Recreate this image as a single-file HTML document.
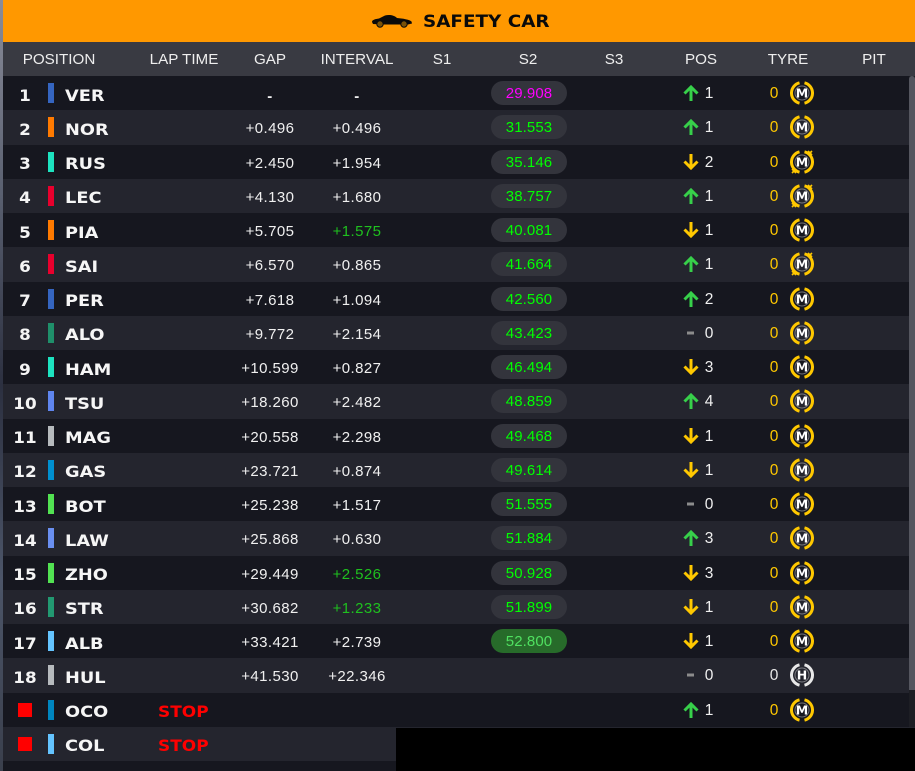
<!DOCTYPE html>
<html><head><meta charset="utf-8">
<style>
html,body{margin:0;padding:0;background:#000;}
#w{position:relative;width:915px;height:771px;overflow:hidden;background:#000;font-family:"Liberation Sans",sans-serif;color:#f0f0f0;}
#sl{position:absolute;left:0;top:0;width:3px;height:771px;background:linear-gradient(#8a8c99,#5a6070 25%,#2c3040 50%,#4c5568 75%,#3a3f4c);}
#top{position:absolute;left:3px;top:0;width:912px;height:42px;background:#ff9800;}
#top b{position:absolute;left:420px;top:12px;font:bold 17px/20px "DejaVu Sans",sans-serif;color:#0a0a0a;white-space:nowrap;transform:scaleX(1.08);transform-origin:left;}
#top svg{position:absolute;left:368px;top:14px;}
#hd{position:absolute;left:3px;top:42px;width:912px;height:34px;background:#393a42;}
#hd span{position:absolute;top:8.500px;font-size:15.200px;line-height:18px;color:#eee;transform:translateX(-50%);white-space:nowrap;}
#rows{position:absolute;left:3px;top:76px;width:912px;}
.r{position:relative;height:34.25px;background:#16171f;}
.r.a{background:#24252e;}
.r>*{position:absolute;}
.n{left:0;width:44px;text-align:center;top:10.500px;font:bold 16px/18px "DejaVu Sans",sans-serif;color:#f4f4f4;transform:scaleX(1.05);}
.q{left:15px;top:10px;width:14px;height:14px;background:#f00;}
.c{left:45px;top:7px;width:5.5px;height:20px;}
.d{left:62px;top:10.500px;font:bold 16px/18px "DejaVu Sans",sans-serif;color:#f6f6f6;transform:scaleX(1.11);transform-origin:left;}
.s{left:155px;top:10.500px;font:bold 16px/18px "DejaVu Sans",sans-serif;color:#f00;transform:scaleX(1.06);transform-origin:left;}
.g,.v{top:11px;width:90px;text-align:center;font-size:15px;line-height:16px;color:#f0f0f0;letter-spacing:.4px;}
.g{left:222px;}.v{left:309px;}
.v.f{color:#1fc01f;}
.h{top:13px;font-weight:bold;}
.p{left:488px;top:5px;width:76px;height:24px;border-radius:12px;background:#33343c;color:#0f0;text-align:center;font-size:15px;line-height:26px;letter-spacing:.1px;}
.p.m{color:#f0f;}
.p.o{background:#276b2a;color:#4fe060;}
.u{left:680px;top:9px;}
.k{left:700px;top:10px;width:12px;text-align:center;font-size:15.500px;line-height:16px;color:#f0f0f0;}
.z{left:765px;top:10px;width:12px;text-align:center;font-size:15.500px;line-height:16px;color:#ffc800;}
.z.w{color:#e8e8e8;}
.t{left:787px;top:5px;}
.t text{font:bold 12.500px "DejaVu Sans",sans-serif;fill:#fff;text-anchor:middle;}
#sb{position:absolute;left:909px;top:76px;width:6px;height:651px;background:#1d1e24;}
#sb i{display:block;width:6px;height:614px;background:#55565f;border-radius:3px 3px 0 0;}
#bl{position:absolute;left:396px;top:728px;width:519px;height:43px;background:#000;}
#bt{position:absolute;left:3px;top:761px;width:393px;height:10px;background:#16171f;}
</style></head><body>
<div id="w">
<div id="sl"></div>
<div id="top">
<svg width="42" height="14" viewBox="0 0 42 14"><path d="M1 8C1 6 4 5 8 4.500L14 1.500C18 0.500 23 1 26 4C32 4.500 38 5.500 40.500 7.500L41 9.500L37 10.500H10L2 10Z" fill="#0a0a0a"/><circle cx="9" cy="10" r="3.200" fill="#7a5208" stroke="#0a0a0a"/><circle cx="33" cy="10" r="3.200" fill="#7a5208" stroke="#0a0a0a"/></svg>
<b>SAFETY CAR</b>
</div>
<div id="hd">
<span style="left:56px">POSITION</span><span style="left:181px">LAP TIME</span><span style="left:267px">GAP</span><span style="left:354px">INTERVAL</span><span style="left:439px">S1</span><span style="left:525px">S2</span><span style="left:611px">S3</span><span style="left:698px">POS</span><span style="left:785px">TYRE</span><span style="left:871px">PIT</span>
</div>
<svg width="0" height="0" style="position:absolute">
<defs>
<symbol id="up" viewBox="0 0 16 16"><path d="M8 16V2M1.500 8.500L8 2L14.500 8.500" fill="none" stroke="#37d04a" stroke-width="3"/></symbol>
<symbol id="dn" viewBox="0 0 16 16"><path d="M8 0V14M1.500 7.500L8 14L14.500 7.500" fill="none" stroke="#ffc800" stroke-width="3"/></symbol>
<symbol id="ds" viewBox="0 0 16 16"><rect x="4" y="6.500" width="7" height="3" fill="#8c8c8c"/></symbol>
<symbol id="rm" viewBox="0 0 24 24"><path d="M9.500 1.800A10.500 10.500 0 0 0 9.500 22.200M14.500 1.800A10.500 10.500 0 0 1 14.500 22.200" fill="none" stroke="#ffc800" stroke-width="3"/><circle cx="12" cy="12" r="7" fill="none" stroke="#fff" stroke-opacity=".4" stroke-width="1"/></symbol>
<symbol id="rh" viewBox="0 0 24 24"><path d="M9.500 1.800A10.500 10.500 0 0 0 9.500 22.200M14.500 1.800A10.500 10.500 0 0 1 14.500 22.200" fill="none" stroke="#e8e8e8" stroke-width="3"/><circle cx="12" cy="12" r="7" fill="none" stroke="#fff" stroke-opacity=".4" stroke-width="1"/></symbol>
<symbol id="x1" viewBox="0 0 24 24"><path d="M18 1L22 5M22 1L18 5" stroke="#ffc800" stroke-width="1.600"/></symbol>
<symbol id="x2" viewBox="0 0 24 24"><path d="M2 19L6 23M6 19L2 23" stroke="#ffc800" stroke-width="1.600"/></symbol>
</defs>
</svg>
<div id="rows">
<div class="r"><b class="n">1</b><i class="c" style="background:#3565c0"></i><b class="d">VER</b><span class="g h">-</span><span class="v h">-</span><span class="p m">29.908</span><svg class="u" width="16" height="16"><use href="#up"/></svg><span class="k">1</span><span class="z">0</span><svg class="t" width="24" height="24"><use href="#rm"/><text x="12" y="16.500">M</text></svg></div>
<div class="r a"><b class="n">2</b><i class="c" style="background:#ff7a00"></i><b class="d">NOR</b><span class="g">+0.496</span><span class="v">+0.496</span><span class="p">31.553</span><svg class="u" width="16" height="16"><use href="#up"/></svg><span class="k">1</span><span class="z">0</span><svg class="t" width="24" height="24"><use href="#rm"/><text x="12" y="16.500">M</text></svg></div>
<div class="r"><b class="n">3</b><i class="c" style="background:#1de3c0"></i><b class="d">RUS</b><span class="g">+2.450</span><span class="v">+1.954</span><span class="p">35.146</span><svg class="u" width="16" height="16"><use href="#dn"/></svg><span class="k">2</span><span class="z">0</span><svg class="t" width="24" height="24"><use href="#rm"/><use href="#x1"/><use href="#x2"/><text x="12" y="16.500">M</text></svg></div>
<div class="r a"><b class="n">4</b><i class="c" style="background:#e8002d"></i><b class="d">LEC</b><span class="g">+4.130</span><span class="v">+1.680</span><span class="p">38.757</span><svg class="u" width="16" height="16"><use href="#up"/></svg><span class="k">1</span><span class="z">0</span><svg class="t" width="24" height="24"><use href="#rm"/><use href="#x1"/><use href="#x2"/><text x="12" y="16.500">M</text></svg></div>
<div class="r"><b class="n">5</b><i class="c" style="background:#ff7a00"></i><b class="d">PIA</b><span class="g">+5.705</span><span class="v f">+1.575</span><span class="p">40.081</span><svg class="u" width="16" height="16"><use href="#dn"/></svg><span class="k">1</span><span class="z">0</span><svg class="t" width="24" height="24"><use href="#rm"/><text x="12" y="16.500">M</text></svg></div>
<div class="r a"><b class="n">6</b><i class="c" style="background:#e8002d"></i><b class="d">SAI</b><span class="g">+6.570</span><span class="v">+0.865</span><span class="p">41.664</span><svg class="u" width="16" height="16"><use href="#up"/></svg><span class="k">1</span><span class="z">0</span><svg class="t" width="24" height="24"><use href="#rm"/><use href="#x1"/><use href="#x2"/><text x="12" y="16.500">M</text></svg></div>
<div class="r"><b class="n">7</b><i class="c" style="background:#3565c0"></i><b class="d">PER</b><span class="g">+7.618</span><span class="v">+1.094</span><span class="p">42.560</span><svg class="u" width="16" height="16"><use href="#up"/></svg><span class="k">2</span><span class="z">0</span><svg class="t" width="24" height="24"><use href="#rm"/><text x="12" y="16.500">M</text></svg></div>
<div class="r a"><b class="n">8</b><i class="c" style="background:#1f8f6a"></i><b class="d">ALO</b><span class="g">+9.772</span><span class="v">+2.154</span><span class="p">43.423</span><svg class="u" width="16" height="16"><use href="#ds"/></svg><span class="k">0</span><span class="z">0</span><svg class="t" width="24" height="24"><use href="#rm"/><text x="12" y="16.500">M</text></svg></div>
<div class="r"><b class="n">9</b><i class="c" style="background:#1de3c0"></i><b class="d">HAM</b><span class="g">+10.599</span><span class="v">+0.827</span><span class="p">46.494</span><svg class="u" width="16" height="16"><use href="#dn"/></svg><span class="k">3</span><span class="z">0</span><svg class="t" width="24" height="24"><use href="#rm"/><text x="12" y="16.500">M</text></svg></div>
<div class="r a"><b class="n">10</b><i class="c" style="background:#5f85ee"></i><b class="d">TSU</b><span class="g">+18.260</span><span class="v">+2.482</span><span class="p">48.859</span><svg class="u" width="16" height="16"><use href="#up"/></svg><span class="k">4</span><span class="z">0</span><svg class="t" width="24" height="24"><use href="#rm"/><text x="12" y="16.500">M</text></svg></div>
<div class="r"><b class="n">11</b><i class="c" style="background:#b6babd"></i><b class="d">MAG</b><span class="g">+20.558</span><span class="v">+2.298</span><span class="p">49.468</span><svg class="u" width="16" height="16"><use href="#dn"/></svg><span class="k">1</span><span class="z">0</span><svg class="t" width="24" height="24"><use href="#rm"/><text x="12" y="16.500">M</text></svg></div>
<div class="r a"><b class="n">12</b><i class="c" style="background:#0090d0"></i><b class="d">GAS</b><span class="g">+23.721</span><span class="v">+0.874</span><span class="p">49.614</span><svg class="u" width="16" height="16"><use href="#dn"/></svg><span class="k">1</span><span class="z">0</span><svg class="t" width="24" height="24"><use href="#rm"/><text x="12" y="16.500">M</text></svg></div>
<div class="r"><b class="n">13</b><i class="c" style="background:#52e252"></i><b class="d">BOT</b><span class="g">+25.238</span><span class="v">+1.517</span><span class="p">51.555</span><svg class="u" width="16" height="16"><use href="#ds"/></svg><span class="k">0</span><span class="z">0</span><svg class="t" width="24" height="24"><use href="#rm"/><text x="12" y="16.500">M</text></svg></div>
<div class="r a"><b class="n">14</b><i class="c" style="background:#6a8ff0"></i><b class="d">LAW</b><span class="g">+25.868</span><span class="v">+0.630</span><span class="p">51.884</span><svg class="u" width="16" height="16"><use href="#up"/></svg><span class="k">3</span><span class="z">0</span><svg class="t" width="24" height="24"><use href="#rm"/><text x="12" y="16.500">M</text></svg></div>
<div class="r"><b class="n">15</b><i class="c" style="background:#52e252"></i><b class="d">ZHO</b><span class="g">+29.449</span><span class="v f">+2.526</span><span class="p">50.928</span><svg class="u" width="16" height="16"><use href="#dn"/></svg><span class="k">3</span><span class="z">0</span><svg class="t" width="24" height="24"><use href="#rm"/><text x="12" y="16.500">M</text></svg></div>
<div class="r a"><b class="n">16</b><i class="c" style="background:#229971"></i><b class="d">STR</b><span class="g">+30.682</span><span class="v f">+1.233</span><span class="p">51.899</span><svg class="u" width="16" height="16"><use href="#dn"/></svg><span class="k">1</span><span class="z">0</span><svg class="t" width="24" height="24"><use href="#rm"/><text x="12" y="16.500">M</text></svg></div>
<div class="r"><b class="n">17</b><i class="c" style="background:#64c4ff"></i><b class="d">ALB</b><span class="g">+33.421</span><span class="v">+2.739</span><span class="p o">52.800</span><svg class="u" width="16" height="16"><use href="#dn"/></svg><span class="k">1</span><span class="z">0</span><svg class="t" width="24" height="24"><use href="#rm"/><text x="12" y="16.500">M</text></svg></div>
<div class="r a"><b class="n">18</b><i class="c" style="background:#b6babd"></i><b class="d">HUL</b><span class="g">+41.530</span><span class="v">+22.346</span><svg class="u" width="16" height="16"><use href="#ds"/></svg><span class="k">0</span><span class="z w">0</span><svg class="t" width="24" height="24"><use href="#rh"/><text x="12" y="16.500">H</text></svg></div>
<div class="r"><i class="q"></i><i class="c" style="background:#0086c0"></i><b class="d">OCO</b><b class="s">STOP</b><svg class="u" width="16" height="16"><use href="#up"/></svg><span class="k">1</span><span class="z">0</span><svg class="t" width="24" height="24"><use href="#rm"/><text x="12" y="16.500">M</text></svg></div>
<div class="r a"><i class="q"></i><i class="c" style="background:#64c4ff"></i><b class="d">COL</b><b class="s">STOP</b></div>
</div>
<div id="sb"><i></i></div>
<div id="bl"></div>
<div id="bt"></div>
</div>
</body></html>
